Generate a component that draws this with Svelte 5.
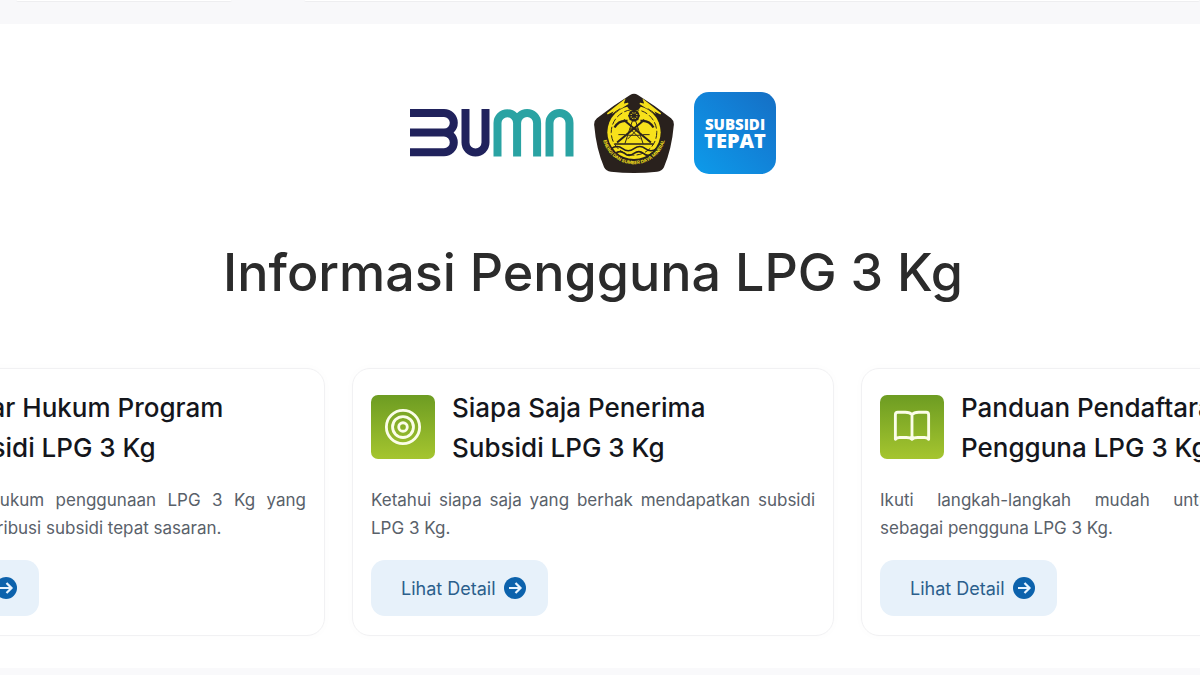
<script>
	const cards = [
		{
			icon: 'scale',
			title: ['Dasar Hukum Program', 'Subsidi LPG 3 Kg'],
			text: ['Ketahui dasar hukum penggunaan LPG 3 Kg yang', 'pelaksanaan distribusi subsidi tepat sasaran.']
		},
		{
			icon: 'target',
			title: ['Siapa Saja Penerima', 'Subsidi LPG 3 Kg'],
			text: ['Ketahui siapa saja yang berhak mendapatkan subsidi', 'LPG 3 Kg.']
		},
		{
			icon: 'book',
			title: ['Panduan Pendaftaran', 'Pengguna LPG 3 Kg'],
			text: ['Ikuti langkah-langkah mudah untuk mendaftar', 'sebagai pengguna LPG 3 Kg.']
		}
	]
</script>

<div class="page">
	<div class="previous">
		<div class="stub"></div>
		<div class="stub wide"></div>
	</div>

	<main>
		<div class="logos">
			<svg class="bumn" viewBox="0 0 164 48" fill="none" stroke-width="8" role="img" aria-label="BUMN">
				<g stroke="#20225c">
					<path d="M0 4H34a9.8 9.8 0 0 1 0 19.6H0M34 23.6a9.8 9.8 0 0 1 0 19.6H0" />
					<path d="M55.5 0V33.5a10 10 0 0 0 20 0V0" />
				</g>
				<g stroke="#2aa3a3">
					<path d="M87.5 47.5V14a9.8 9.8 0 0 1 19.6 0V47.5M107.1 14.5V14a10 10 0 0 1 20 0V47.5" />
					<path d="M139.5 47.5V14a10 10 0 0 1 20 0V47.5" />
				</g>
			</svg>

			<svg class="esdm" viewBox="17 22 246 246" role="img" aria-label="Kementerian ESDM">
				<path d="M128 28Q140 20 152 28Q204 60 254 100Q265 109 262 124Q256 194 232 250Q226 262 211 264Q140 272 69 264Q54 262 48 250Q24 194 18 124Q15 109 26 100Q76 60 128 28Z" fill="#29211d" />
				<circle cx="140" cy="143" r="82" fill="#f7e11b" />
				<circle cx="140" cy="56" r="22" fill="#29211d" />
				<path d="M58 86L110 45L106 57L122 54L78 82L82 74Z" fill="#f7e11b" stroke="#f7e11b" stroke-width="4" />
				<path d="M222 86L170 45L174 57L158 54L202 82L198 74Z" fill="#f7e11b" stroke="#f7e11b" stroke-width="4" />
				<g fill="none" stroke="#29211d">
					<path d="M66 98Q80 78 98 70M214 98Q200 78 182 70" stroke-width="3" />
					<circle cx="140" cy="143" r="70" stroke-width="3" stroke-dasharray="20 7" />
					<circle cx="140" cy="92" r="14" stroke-width="6" />
					<path d="M140 76V108M122 92H158M127 79L153 105M153 79L127 105" stroke-width="4" />
					<path d="M88 174L172 104M192 174L108 104" stroke-width="6" />
					<path d="M80 128Q94 104 120 108M200 128Q186 104 160 108" stroke-width="7" />
					<path d="M112 178L135 108H145L168 178M122 152H158M128 132H152M120 164L152 132M160 164L128 132M92 150H112M168 150H188" stroke-width="3" />
					<path d="M80 179H200" stroke-width="5" />
					<path d="M70 193Q88 180 105 193T140 193T175 193T210 193M82 208Q97 196 111 208T140 208T169 208T198 208" stroke-width="5" />
				</g>
				<path id="ring" d="M42 143A98 98 0 0 0 238 143" fill="none" />
				<text font-size="14" font-weight="700" fill="#f7e11b">
					<textPath href="#ring" startOffset="50%" text-anchor="middle">ENERGI DAN SUMBER DAYA MINERAL</textPath>
				</text>
			</svg>

			<svg class="tepat" viewBox="0 0 82 82">
				<defs>
					<linearGradient id="blue" x1="0" y1="1" x2="1" y2="0">
						<stop offset="0" stop-color="#0d9bea" />
						<stop offset=".6" stop-color="#1280d6" />
						<stop offset="1" stop-color="#156fc4" />
					</linearGradient>
				</defs>
				<rect width="82" height="82" rx="15" fill="url(#blue)" />
				<text x="41" y="38" font-size="15">SUBSIDI</text>
				<text x="41" y="56" font-size="20">TEPAT</text>
			</svg>
		</div>

		<h1>Informasi Pengguna LPG 3 Kg</h1>

		<div class="cards">
			{#each cards as card}
				<article>
					<header>
						<div class="icon">
							<svg viewBox="0 0 40 40" fill="none" stroke="#fbfde8" stroke-width="3" stroke-linejoin="round" aria-hidden="true">
								{#if card.icon === 'target'}
									<circle cx="20" cy="20" r="17.5" />
									<circle cx="20" cy="20" r="11" />
									<circle cx="20" cy="20" r="4.5" />
								{:else if card.icon === 'book'}
									<path d="M20 7Q18 4.500 13 4.500H5Q2.500 4.500 2.500 7V33Q4 31 7 31H14Q18.500 31 20 33Q21.500 31 26 31H33Q36 31 37.500 33V7Q37.500 4.500 35 4.500H27Q22 4.500 20 7V33" />
								{:else}
									<path d="M20 4V35M10 35H30M6 10H34M8 10L2 24H14ZM32 10L26 24H38Z" />
								{/if}
							</svg>
						</div>
						<h2>{card.title[0]}<br />{card.title[1]}</h2>
					</header>
					<p>
						<span class="full">{card.text[0]}</span>
						<span>{card.text[1]}</span>
					</p>
					<button type="button">
						Lihat Detail
						<svg viewBox="0 0 22 22" aria-hidden="true">
							<circle cx="11" cy="11" r="11" fill="#0c62ac" />
							<path d="M5 11H16M11.500 6L16.500 11L11.500 16" fill="none" stroke="#e8f4ff" stroke-width="2.200" />
						</svg>
					</button>
				</article>
			{/each}
		</div>
	</main>
</div>

<style>
	:global(body) {
		margin: 0;
		background: #f9f9fb;
	}

	.page {
		font-family: Inter, Roboto, sans-serif;
		min-height: 100vh;
		overflow: hidden;
	}

	.previous {
		display: flex;
		gap: 72px;
		height: 24px;
		padding-left: 16px;
		background: #f8f8fa;
	}

	.stub {
		width: 216px;
		height: 1px;
		background: #fff;
		border-bottom: 1px solid #eeeef0;
		border-radius: 0 0 8px 8px;
	}

	.stub.wide {
		flex: 1;
	}

	main {
		padding: 68px 14px 32px 0;
		background: #fff;
	}

	.logos {
		display: flex;
		justify-content: center;
		align-items: center;
		gap: 20px;
	}

	.bumn {
		width: 164px;
		height: 48px;
	}

	.esdm {
		width: 80px;
		height: 82px;
	}

	.tepat {
		width: 82px;
		height: 82px;
	}

	.tepat text {
		font-family: "Open Sans", Lato, sans-serif;
		font-weight: 800;
		fill: #fff;
		text-anchor: middle;
	}

	h1 {
		margin: 64px 0 60px;
		font-size: 52px;
		line-height: 70px;
		font-weight: 500;
		text-align: center;
		color: #2b2b2b;
	}

	.cards {
		display: flex;
		justify-content: center;
		gap: 27px;
	}

	article {
		flex: 0 0 482px;
		box-sizing: border-box;
		padding: 19px 18px;
		border: 1px solid #f1f1f3;
		border-radius: 18px;
		box-shadow: 0 0 10px rgba(0, 0, 0, 0.02);
	}

	header {
		display: flex;
		align-items: flex-start;
		gap: 17px;
	}

	.icon {
		display: flex;
		justify-content: center;
		align-items: center;
		width: 64px;
		height: 64px;
		margin-top: 7px;
		border-radius: 7px;
		background: linear-gradient(#6d9c22, #a5c52f);
	}

	.icon svg {
		width: 38px;
		height: 38px;
	}

	h2 {
		margin: 0;
		font-size: 26px;
		line-height: 40px;
		font-weight: 500;
		white-space: nowrap;
		color: #14161c;
	}

	p {
		margin: 18px 0;
		font-size: 17px;
		line-height: 28px;
		color: #59616a;
	}

	p span {
		display: block;
		white-space: nowrap;
	}

	p .full {
		white-space: normal;
		text-align-last: justify;
	}

	button {
		display: flex;
		align-items: center;
		gap: 8px;
		height: 56px;
		padding: 0 22px 0 30px;
		border: 0;
		border-radius: 14px;
		background: #e7f1fa;
		font: inherit;
		font-size: 18px;
		color: #2b5f8c;
		cursor: pointer;
	}

	button svg {
		width: 22px;
		height: 22px;
	}
</style>
